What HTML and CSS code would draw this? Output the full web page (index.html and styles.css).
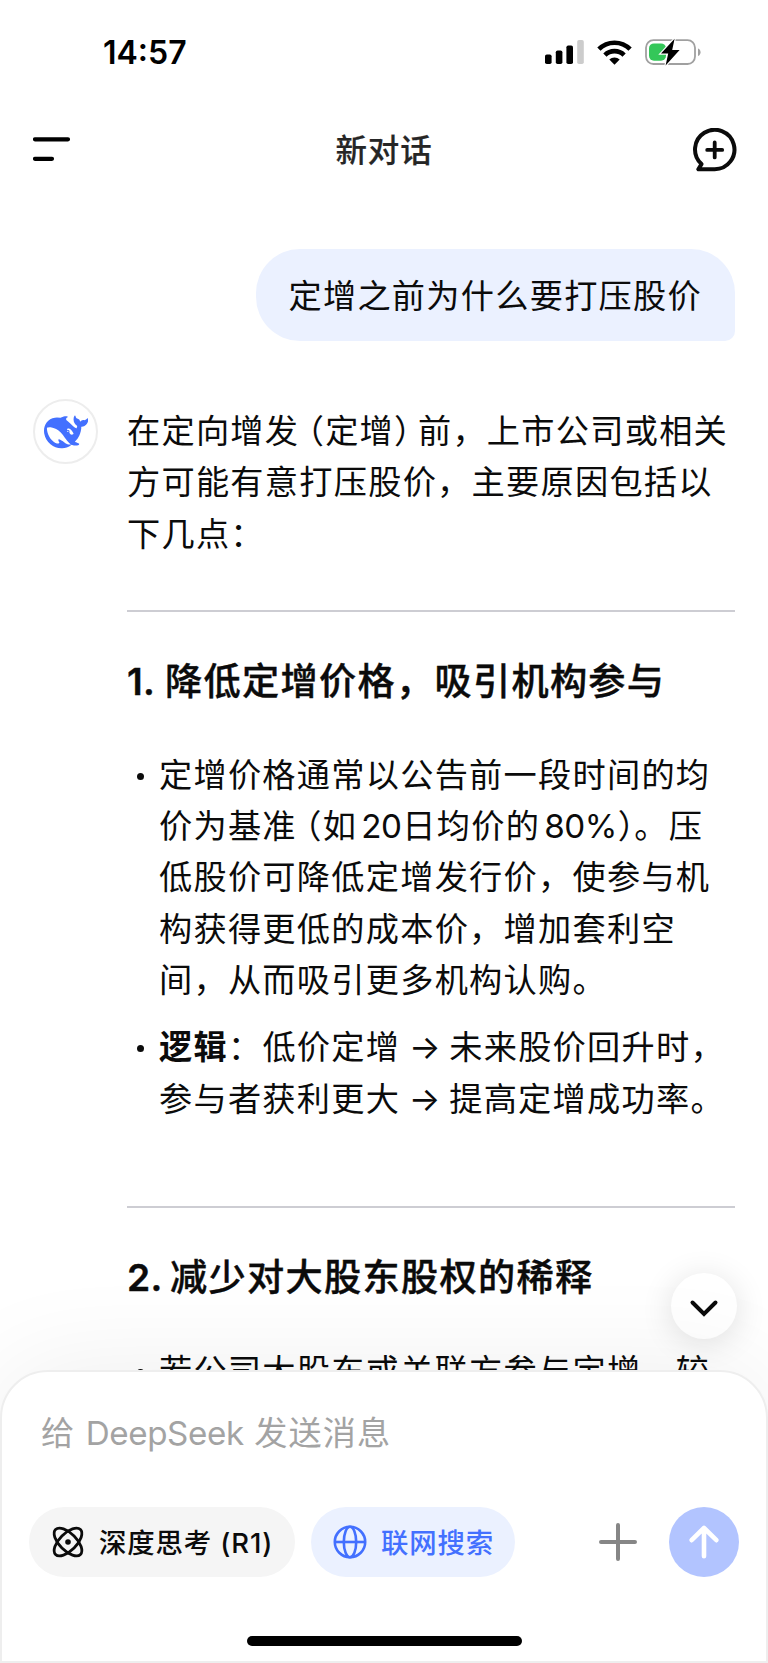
FILE: index.html
```
<!DOCTYPE html>
<html lang="zh-CN">
<head>
  <meta charset="UTF-8" />
  <title>新对话</title>
  <meta name="viewport" content="width=device-width, initial-scale=1.0" />
  <link rel="stylesheet" href="styles.css">
</head>
<body>

  <div class="status-bar">
    <span class="time">14:57</span>
    <div class="status-icons">
      <svg class="signal" width="39" height="24" viewBox="0 0 39 24">
        <rect x="0" y="14.5" width="6.6" height="9.5" rx="1.8"/>
        <rect x="10.8" y="10.5" width="6.6" height="13.5" rx="1.8"/>
        <rect x="21.4" y="5.5" width="6.6" height="18.5" rx="1.8"/>
        <rect x="32.2" y="0" width="6.6" height="24" rx="1.8" fill="#ccc"/>
      </svg>
      <svg class="wifi" width="35" height="25" viewBox="0 0 35 25">
        <path d="M1.9 9.2a22 22 0 0 1 31.2 0M7.9 15.1a13.6 13.6 0 0 1 19.2 0" fill="none" stroke="#000" stroke-width="4.6"/>
        <path d="M17.5 24.8l-5.2-5.2a7.4 7.4 0 0 1 10.4 0z"/>
      </svg>
      <svg class="battery" width="56" height="28" viewBox="0 0 56 28">
        <rect x="1" y="2.2" width="49" height="23.8" rx="7.5" fill="none" stroke="#a0a0a0" stroke-width="1.8"/>
        <path d="M53 10.4c3.4 1.2 3.4 6.4 0 7.6z" fill="#a0a0a0"/>
        <rect x="4" y="5.4" width="17" height="17.4" rx="5" fill="#34c759"/>
        <path d="M29.6 .8L16 15.6h7.2L20.6 27.4l14-15.4h-7.4z" fill="#000" stroke="#fff" stroke-width="2.4" paint-order="stroke"/>
      </svg>
    </div>
  </div>

  <header class="nav">
    <svg class="menu-icon" width="44" height="44" viewBox="0 0 44 44">
      <path d="M2 11.3h33M2 30.8h17" stroke="#000" stroke-width="4.2" stroke-linecap="round"/>
    </svg>
    <h1>新对话</h1>
    <svg class="new-chat" width="44" height="44" viewBox="0 0 44 44">
      <path d="M21.7 41.2a19.7 19.7 0 1 0-13.2-5.1l-3.2 5.1z" fill="none" stroke="#0b0b0b" stroke-width="4" stroke-linejoin="round"/>
      <path d="M21.7 14.4v15M14.2 21.9h15" stroke="#0b0b0b" stroke-width="3.8" stroke-linecap="round"/>
    </svg>
  </header>

  <main class="chat">
    <div class="bubble">定增之前为什么要打压股价</div>

    <div class="reply">
      <div class="avatar">
        <svg width="44.4" height="44.4" viewBox="0 0 24 24" fill="#4370ff">
          <path d="M23.748 4.482c-.254-.124-.364.113-.512.234-.051.039-.094.09-.137.136-.372.397-.806.657-1.373.626-.829-.046-1.537.214-2.163.848-.133-.782-.575-1.248-1.247-1.548-.352-.156-.708-.311-.955-.65-.172-.241-.219-.51-.305-.774-.055-.16-.11-.323-.293-.35-.2-.031-.278.136-.356.276-.313.572-.434 1.202-.422 1.84.027 1.436.633 2.58 1.838 3.393.137.093.172.187.129.323-.082.28-.18.552-.266.833-.055.179-.137.217-.329.14a5.526 5.526 0 0 1-1.736-1.18c-.857-.828-1.631-1.742-2.597-2.458a11.365 11.365 0 0 0-.689-.471c-.985-.957.13-1.743.388-1.836.27-.098.093-.432-.779-.428-.872.004-1.67.295-2.687.684a3.055 3.055 0 0 1-.465.137 9.597 9.597 0 0 0-2.883-.102c-1.885.21-3.39 1.102-4.497 2.623C.082 8.606-.231 10.684.152 12.85c.403 2.284 1.569 4.175 3.36 5.653 1.858 1.533 3.997 2.284 6.438 2.14 1.482-.085 3.133-.284 4.994-1.86.47.234.962.327 1.78.397.63.059 1.236-.03 1.705-.128.735-.156.684-.837.419-.961-2.155-1.004-1.682-.595-2.113-.926 1.096-1.296 2.746-2.642 3.392-7.003.05-.347.007-.565 0-.845-.004-.17.035-.237.23-.256a4.173 4.173 0 0 0 1.545-.475c1.396-.763 1.96-2.015 2.093-3.517.02-.23-.004-.467-.247-.588zM11.581 18c-2.089-1.642-3.102-2.183-3.52-2.16-.392.024-.321.471-.235.763.09.288.207.486.371.739.114.167.192.416-.113.603-.673.416-1.842-.14-1.897-.167-1.361-.802-2.5-1.86-3.301-3.307-.774-1.393-1.224-2.887-1.298-4.482-.02-.386.093-.522.477-.592a4.696 4.696 0 0 1 1.529-.039c2.132.312 3.946 1.265 5.468 2.774.868.86 1.525 1.887 2.202 2.891.72 1.066 1.494 2.082 2.48 2.914.348.292.625.514.891.677-.802.09-2.14.11-3.054-.614zm1-6.44a.306.306 0 0 1 .415-.287.302.302 0 0 1 .2.288.306.306 0 0 1-.31.307.303.303 0 0 1-.304-.308zm3.11 1.596c-.2.081-.399.151-.59.16a1.245 1.245 0 0 1-.798-.254c-.274-.23-.47-.358-.552-.758a1.73 1.73 0 0 1 .016-.588c.07-.327-.008-.537-.239-.727-.187-.156-.426-.199-.688-.199a.559.559 0 0 1-.254-.078c-.11-.054-.2-.19-.114-.358.028-.054.16-.186.192-.21.356-.202.767-.136 1.146.016.352.144.618.408 1.001.782.391.451.462.576.685.914.176.265.336.537.445.848.067.195-.019.354-.25.452z"/>
        </svg>
      </div>

      <div class="answer">
        <p>在定向增发<span class="open">（</span>定增<span class="close">）</span>前，上市公司或相关<br>方可能有意打压股价，主要原因包括以<br>下几点：</p>
        <hr>
        <h3><span class="num">1.</span>降低定增价格，吸引机构参与</h3>
        <ul>
          <li>定增价格通常以公告前一段时间的均<br>价为基准<span class="open">（</span>如<span class="latin">20</span>日均价的<span class="latin">80%</span><span class="close tight">）</span>。压<br>低股价可降低定增发行价，使参与机<br>构获得更低的成本价，增加套利空<br>间，从而吸引更多机构认购。</li>
          <li><b>逻辑</b>：低价定增<span class="arrow">→</span>未来股价回升时，<br>参与者获利更大<span class="arrow">→</span>提高定增成功率。</li>
        </ul>
        <hr>
        <h3><span class="num two">2.</span>减少对大股东股权的稀释</h3>
        <ul>
          <li>若公司大股东或关联方参与定增，较</li>
        </ul>
      </div>
    </div>

    <!-- Scroll to bottom -->
    <div class="scroll-down">
      <svg width="30" height="20" viewBox="0 0 30 20">
        <path d="M3.5 3.5L15 15 26.5 3.5" fill="none" stroke="#0b0b0b" stroke-width="4" stroke-linecap="round" stroke-linejoin="miter"/>
      </svg>
    </div>
  </main>

  <footer class="composer">
    <div class="placeholder">给 <span class="brand">DeepSeek</span> 发送消息</div>
    <div class="tools">
      <div class="pill think">
        <svg width="34" height="34" viewBox="0 0 34 34" fill="none" stroke="#0b0b0b" stroke-width="2.8">
          <ellipse cx="17" cy="17" rx="17.6" ry="8.6" transform="rotate(45 17 17)"/>
          <ellipse cx="17" cy="17" rx="17.6" ry="8.6" transform="rotate(-45 17 17)"/>
          <circle cx="17" cy="17" r="2.8" fill="#0b0b0b" stroke="none"/>
        </svg>
        <span>深度思考 (R1)</span>
      </div>
      <div class="pill search">
        <svg width="34" height="34" viewBox="0 0 34 34" fill="none" stroke="#4370ff" stroke-width="2.6">
          <circle cx="17" cy="17" r="15.2"/>
          <ellipse cx="17" cy="17" rx="6.2" ry="15.2"/>
          <path d="M1.8 17h30.4"/>
        </svg>
        <span>联网搜索</span>
      </div>
      <svg class="plus" width="40" height="40" viewBox="0 0 40 40">
        <path d="M20 3v34M3 20h34" stroke="#868686" stroke-width="4" stroke-linecap="round"/>
      </svg>
      <div class="send">
        <svg width="32" height="36" viewBox="0 0 32 36">
          <path d="M16 32.2V4.5M3.6 16.2L16 4l12.4 12.2" fill="none" stroke="#fff" stroke-width="4.6" stroke-linecap="round" stroke-linejoin="round"/>
        </svg>
      </div>
    </div>
    <div class="home-bar"></div>
  </footer>

</body>
</html>
```
FILE: styles.css
```
* {
  box-sizing: border-box;
}

html, body {
  margin: 0;
  padding: 0;
  height: 100%;
}

body {
  display: flex;
  flex-direction: column;
  height: 1663px;
  overflow: hidden;
  background: #fff;
  color: #0b0b0b;
  font-family: Inter, "Noto Sans CJK SC", sans-serif;
}

svg {
  display: block;
  flex: none;
}

.status-bar {
  display: flex;
  justify-content: space-between;
  align-items: center;
  height: 104px;
  padding: 0 67px 0 103px;
}

.time {
  font-size: 32px;
  font-weight: 600;
  color: #000;
}

.status-icons {
  display: flex;
  align-items: center;
}

.wifi {
  margin-left: 13px;
}

.battery {
  margin-left: 13px;
}

.nav {
  display: flex;
  justify-content: space-between;
  align-items: center;
  height: 92px;
  padding: 0 31px 0 33px;
}

.nav h1 {
  margin: 0;
  padding: 0 2px 4px 0;
  font-size: 31.5px;
  font-weight: 500;
  letter-spacing: 0.9px;
  color: #262626;
  -webkit-text-stroke: 0.2px #262626;
}

.chat {
  position: relative;
  flex: 1;
  min-height: 0;
  display: flex;
  flex-direction: column;
  padding: 53px 33px 0;
  overflow: hidden;
}

.bubble {
  align-self: flex-end;
  flex: none;
  height: 92px;
  padding: 1px 33px 0 33px;
  border-radius: 44px 44px 10px 44px;
  background: #ebf1ff;
  font-size: 33.2px;
  line-height: 92px;
  letter-spacing: 1.27px;
}

.reply {
  display: flex;
  margin-top: 58px;
}

.avatar {
  flex: none;
  display: flex;
  align-items: center;
  justify-content: center;
  width: 65px;
  height: 65px;
  padding: 1px 0 0 1px;
  border: 2px solid #ededed;
  border-radius: 50%;
}

.answer {
  flex: 1;
  margin-left: 29px;
  padding-top: 7px;
  font-size: 33.2px;
  line-height: 51.3px;
  letter-spacing: 1.27px;
  white-space: nowrap;
}

.answer p {
  margin: 0;
}

.answer hr {
  height: 2px;
  margin: 50px 0 0;
  border: none;
  background: #cdcdd3;
}

.answer h3 {
  margin: 42px 0 0;
  font-size: 37.2px;
  font-weight: 500;
  line-height: 56px;
  letter-spacing: 1.3px;
  -webkit-text-stroke: 0.4px #0b0b0b;
}

.num {
  display: inline-block;
  width: 38px;
  font-weight: 600;
  letter-spacing: 0.4px;
}

.num.two {
  width: 43px;
}

.answer ul {
  margin: 40px 0 0;
  padding: 0;
  list-style: none;
}

.answer ul + hr {
  margin-top: 81px;
}

.answer li {
  position: relative;
  padding-left: 32px;
}

.answer li + li {
  margin-top: 16px;
}

.answer li::before {
  content: "";
  position: absolute;
  top: 23px;
  left: 10px;
  width: 7px;
  height: 7px;
  border-radius: 50%;
  background: #0b0b0b;
}

/* brackets take half a cell */
.open, .close {
  font-family: "Noto Sans CJK SC", sans-serif;
  font-feature-settings: "halt";
  line-height: 1;
}

.open {
  margin-left: 8px;
}

.close {
  margin-right: 6px;
}

.close.tight {
  margin-right: 0;
  letter-spacing: 0;
}

.latin {
  margin: 0 1px 0 4px;
  letter-spacing: -0.5px;
}

.arrow {
  display: inline-block;
  width: 49px;
  text-align: center;
  letter-spacing: 0;
}

.scroll-down {
  position: absolute;
  right: 31px;
  bottom: 31px;
  display: flex;
  align-items: center;
  justify-content: center;
  width: 66px;
  height: 66px;
  padding-top: 6px;
  border-radius: 50%;
  background: #fff;
  box-shadow: 0 4px 32px rgba(0, 0, 0, 0.12);
}

.composer {
  position: relative;
  height: 293px;
  padding: 35px 27px 0;
  border: 2px solid #eee;
  border-radius: 48px 48px 0 0;
  background: #fff;
  box-shadow: 0 0 110px rgba(0, 0, 0, 0.07);
}

.placeholder {
  padding-left: 12px;
  font-size: 33.2px;
  line-height: 52px;
  letter-spacing: 1.1px;
  color: #a3a3a3;
}

.brand {
  letter-spacing: -0.4px;
}

.tools {
  display: flex;
  align-items: center;
  margin-top: 48px;
}

.pill {
  display: flex;
  align-items: center;
  height: 70px;
  border-radius: 35px;
  font-size: 27.4px;
  font-weight: 500;
  white-space: nowrap;
}

.pill span {
  padding-bottom: 2px;
  letter-spacing: 0.9px;
}

.think {
  width: 266px;
  padding-left: 22px;
  gap: 14px;
  background: #f5f5f5;
}

.search {
  width: 204px;
  margin-left: 16px;
  padding-left: 22px;
  gap: 14px;
  background: #ebf1ff;
  color: #4370ff;
}

.plus {
  margin-left: auto;
}

.send {
  display: flex;
  align-items: center;
  justify-content: center;
  width: 70px;
  height: 70px;
  margin-left: 31px;
  border-radius: 50%;
  background: #b2c4ff;
}

.home-bar {
  width: 275px;
  height: 10px;
  margin: 59px auto 0;
  border-radius: 5px;
  background: #000;
}
```
